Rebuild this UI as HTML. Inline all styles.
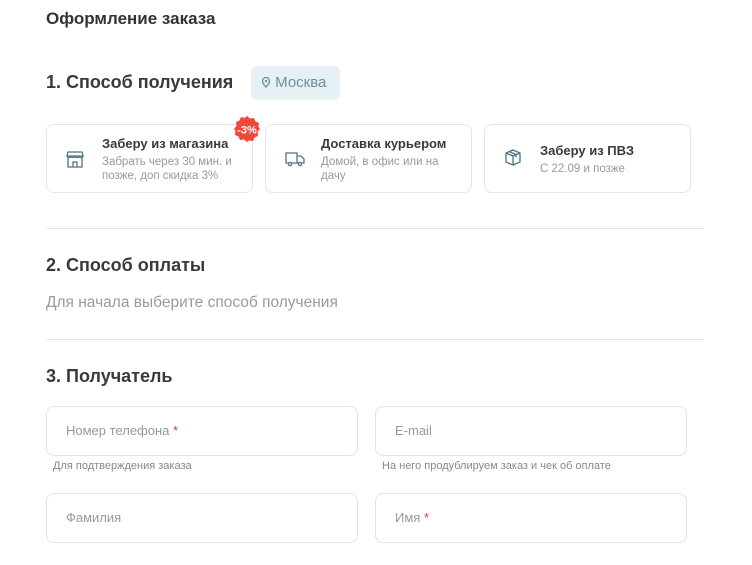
<!DOCTYPE html><html><head><meta charset="utf-8"><style>
*{box-sizing:border-box;margin:0;padding:0}
body{width:752px;height:565px;background:#fff;font-family:"Liberation Sans","Noto Sans CJK SC",sans-serif;color:#333;position:relative;overflow:hidden}
.a{position:absolute;white-space:nowrap}
h1{font-size:17px;font-weight:bold;color:#333}
.h{font-size:18px;font-weight:bold;color:#3a3a3a}
.chip{left:251px;top:66px;width:89px;height:34px;background:#e7f0f4;border-radius:6px;color:#6f8e9e;font-size:15px;line-height:34px;padding-left:10px}
.card{top:124px;width:207px;height:69px;border:1px solid #e6e6e6;border-radius:8px}
.card .t{position:absolute;left:55px;top:11px;font-size:13px;font-weight:bold;color:#3a3a3a}
.card .s{position:absolute;left:55px;top:30px;font-size:11.5px;color:#999;line-height:14px}
.card svg{position:absolute;left:19px;top:26px}
.hr{left:46px;width:658px;height:1px;background:#e6e6e6}
.in{width:312px;height:50px;border:1px solid #e3e3e3;border-radius:8px;font-size:13px;color:#999;padding:16px 0 0 19px}
.in b{color:#e53935;font-weight:normal}
.hl{font-size:11px;color:#888}
</style></head><body>
<h1 class="a" style="left:46px;top:9px">Оформление заказа</h1>
<div class="a h" style="left:46px;top:72px">1. Способ получения</div>
<div class="a chip"><svg width="10" height="11" viewBox="0 0 10 11" style="vertical-align:-1px"><path d="M5 10C2 7 1.5 5.5 1.5 4a3.5 3.5 0 0 1 7 0c0 1.5-.5 3-3.5 6z" fill="none" stroke="#6f8e9e" stroke-width="1.3"/><circle cx="5" cy="4" r="1.2" fill="#6f8e9e"/></svg> Москва</div>

<div class="a card" style="left:46px"><svg width="18" height="17" viewBox="0 0 18 17" fill="none" stroke="#4f7384" stroke-width="1.3"><path d="M2 1h14l1 4H1z"/><path d="M1 5c0 2 4 2 4 0c0 2 4 2 4 0c0 2 4 2 4 0c0 2 4 2 4 0"/><path d="M2 7v9h14V7M7 16v-5h4v5"/></svg><div class="t">Заберу из магазина</div><div class="s">Забрать через 30 мин. и<br>позже, доп скидка 3%</div></div>
<div class="a card" style="left:265px"><svg width="20" height="16" viewBox="0 0 20 16" fill="none" stroke="#4f7384" stroke-width="1.3"><path d="M1 2h11v10H1zM12 5h4l3 3v4h-7"/><circle cx="5" cy="13" r="1.6" fill="#fff"/><circle cx="15" cy="13" r="1.6" fill="#fff"/></svg><div class="t">Доставка курьером</div><div class="s">Домой, в офис или на<br>дачу</div></div>
<div class="a card" style="left:484px"><svg width="17" height="17" viewBox="0 0 17 17" fill="none" stroke="#4f7384" stroke-width="1.3" style="top:24px"><path d="M2 4l7-3 7 3v9l-7 3-7-3zM2 4l7 3 7-3M9 7v9M5 2.5l7 3v3"/></svg><div class="t" style="top:18px">Заберу из ПВЗ</div><div class="s" style="top:37px">С 22.09 и позже</div></div>
<svg class="a" style="left:233px;top:115px" width="28" height="28" viewBox="0 0 28 28"><path d="M14 1l3 2.5 4-.5 1.5 3.5 3.5 1.5-.5 4L27 14l-2.5 3 .5 4-3.5 1.5-1.5 3.5-4-.5L14 27l-3-2.5-4 .5-1.5-3.5L2 20l.5-4L1 14l2.5-3-.5-4L6.5 5.5 8 2l3.5 1z" fill="#f2483a"/><text x="14" y="18.5" text-anchor="middle" font-size="11" font-family="Liberation Sans" fill="#fff" font-weight="bold">-3%</text></svg>

<div class="a hr" style="top:228px"></div>
<div class="a h" style="left:46px;top:255px">2. Способ оплаты</div>
<div class="a" style="left:46px;top:294px;font-size:15.5px;color:#9a9a9a">Для начала выберите способ получения</div>
<div class="a hr" style="top:339px"></div>
<div class="a h" style="left:46px;top:366px">3. Получатель</div>

<div class="a in" style="left:46px;top:406px">Номер телефона <b>*</b></div>
<div class="a in" style="left:375px;top:406px">E-mail</div>
<div class="a hl" style="left:53px;top:460px">Для подтверждения заказа</div>
<div class="a hl" style="left:382px;top:460px">На него продублируем заказ и чек об оплате</div>
<div class="a in" style="left:46px;top:493px">Фамилия</div>
<div class="a in" style="left:375px;top:493px">Имя <b>*</b></div>
</body></html>
